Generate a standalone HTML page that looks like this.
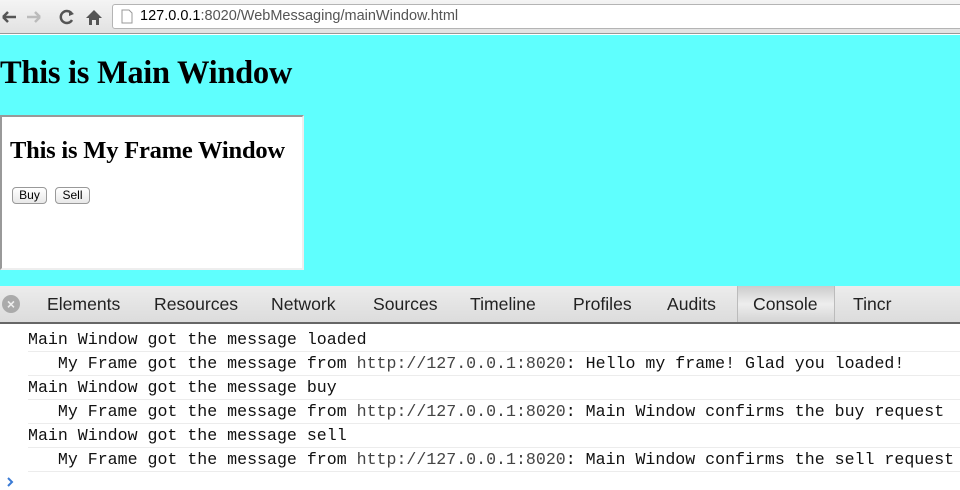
<!DOCTYPE html>
<html><head><style>
*{margin:0;padding:0;box-sizing:border-box}
body{width:960px;height:490px;overflow:hidden;background:#fff;font-family:"Liberation Sans",sans-serif;position:relative}
.tb{position:absolute;left:0;top:0;width:960px;height:34px;background:linear-gradient(#f4f4f4,#e2e2e2);border-bottom:1px solid #999}
.url{position:absolute;left:112px;top:4px;width:860px;height:25px;background:#fff;border:1px solid #b4b4b4;border-radius:3px;font-size:14.5px;line-height:23px;padding-left:27px;color:#555}
.url b{font-weight:normal;color:#000}
.main{position:absolute;left:0;top:35px;width:960px;height:251px;background:#5ffffe}
h1{position:absolute;left:0;top:20px;font:bold 32.5px "Liberation Serif",serif;letter-spacing:-0.3px}
.frame{position:absolute;left:0;top:80px;width:304px;height:155px;background:#fff;border:2px solid;border-color:#999 #eee #eee #999}
h2{position:absolute;left:8px;top:20px;font:bold 24.5px "Liberation Serif",serif;letter-spacing:-0.2px}
.btn{position:absolute;top:70px;height:17px;border:1px solid #999;border-radius:4px;background:linear-gradient(#fff,#e8e8e8);font-size:12px;line-height:15px;text-align:center}
.tabs{position:absolute;left:0;top:286px;width:960px;height:38px;background:linear-gradient(#ececec,#dcdcdc);border-bottom:2px solid #666;font-size:17.6px}
.tabs span{position:absolute;top:8px;color:#222}
.con{position:absolute;left:737px;top:0;width:98px;height:36px;background:linear-gradient(#ccc,#eee 50%,#d4d4d4);border-left:1px solid #bbb;border-right:1px solid #bbb}
.x{position:absolute;left:2px;top:9px;width:18px;height:18px;border-radius:50%;background:#aaa;color:#eee;font-size:14px;line-height:18px;text-align:center;font-weight:bold}
.log{position:absolute;left:28px;width:932px;height:24px;border-bottom:1px solid #ececec;font:16.6px "Liberation Mono",monospace;line-height:24px;color:#111;white-space:pre}
.log i{font-style:normal;color:#444}
</style></head><body>
<div class="tb">
<svg width="110" height="34" style="position:absolute;left:0;top:0">
<path d="M3 17h13M3 17l5-5M3 17l5 5" stroke="#555" stroke-width="2.5" fill="none"/>
<path d="M27 17h13M40 17l-5-5M40 17l-5 5" stroke="#bbb" stroke-width="2.5" fill="none"/>
<path d="M72 14a6 6 0 1 0 0 6" stroke="#555" stroke-width="2.5" fill="none"/><path d="M69 10l5 4-5 2z" fill="#555"/>
<path d="M86 18l8-8 8 8h-3v7h-3v-5h-4v5h-3v-7z" fill="#555"/>
</svg>
<div class="url"><svg width="12" height="15" style="position:absolute;left:8px;top:4px"><path d="M1 1h7l3 3v10H1z" fill="#fff" stroke="#999"/></svg><b>127.0.0.1</b>:8020/WebMessaging/mainWindow.html</div>
</div>
<div class="main">
<h1>This is Main Window</h1>
<div class="frame"><h2>This is My Frame Window</h2>
<div class="btn" style="left:10px;width:35px">Buy</div>
<div class="btn" style="left:53px;width:35px">Sell</div>
</div>
</div>
<div class="tabs">
<div class="x">×</div>
<span style="left:47px">Elements</span><span style="left:154px">Resources</span><span style="left:271px">Network</span><span style="left:373px">Sources</span><span style="left:470px">Timeline</span><span style="left:573px">Profiles</span><span style="left:667px">Audits</span>
<div class="con"><span style="left:15px">Console</span></div>
<span style="left:853px">Tincr</span>
</div>
<div class="log" style="top:328px">Main Window got the message loaded</div>
<div class="log" style="top:352px">   My Frame got the message from <i>http://127.0.0.1:8020</i>: Hello my frame! Glad you loaded!</div>
<div class="log" style="top:376px">Main Window got the message buy</div>
<div class="log" style="top:400px">   My Frame got the message from <i>http://127.0.0.1:8020</i>: Main Window confirms the buy request</div>
<div class="log" style="top:424px">Main Window got the message sell</div>
<div class="log" style="top:448px">   My Frame got the message from <i>http://127.0.0.1:8020</i>: Main Window confirms the sell request</div>
<svg width="10" height="12" style="position:absolute;left:6px;top:476px"><path d="M2 2l4 4-4 4" stroke="#3a7bd5" stroke-width="2" fill="none"/></svg>
</body></html>
